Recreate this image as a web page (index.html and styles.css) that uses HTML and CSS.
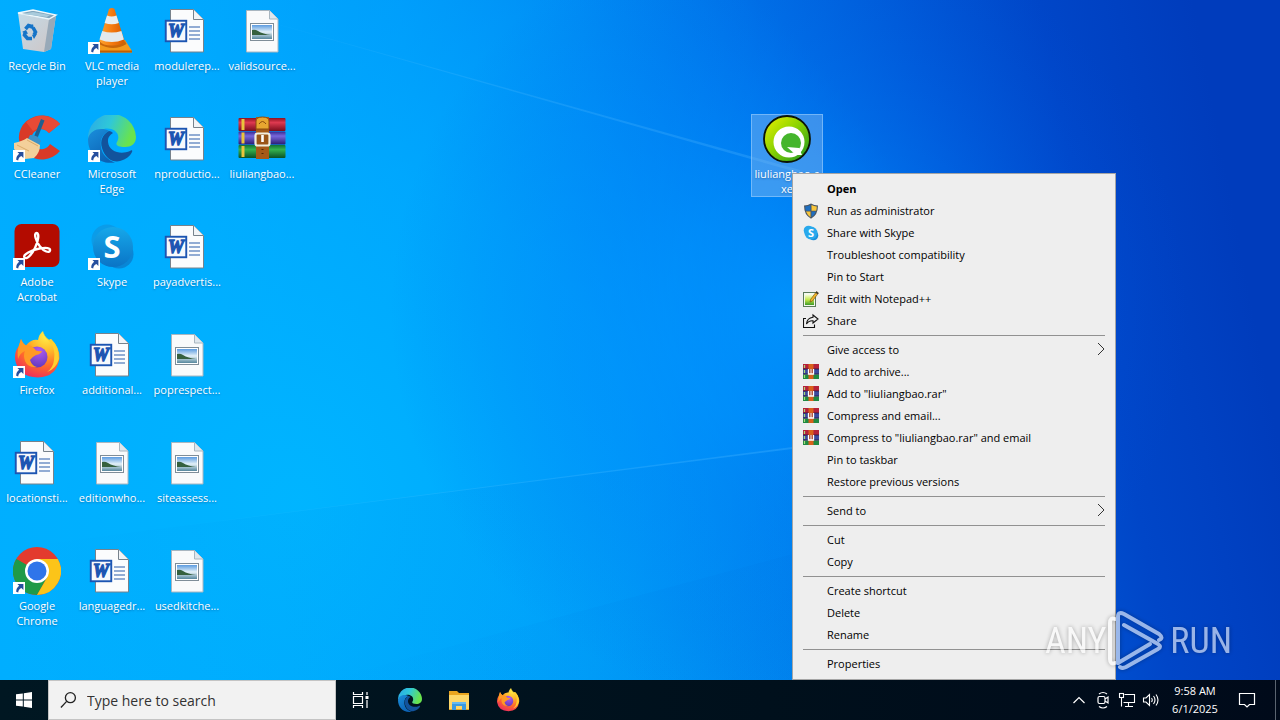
FILE: index.html
```html
<!DOCTYPE html>
<html lang="en">
<head>
<meta charset="utf-8">
<title>Desktop</title>
<link rel="stylesheet" href="styles.css">
</head>
<body>
<svg class="defs" aria-hidden="true">
  <defs>
    <linearGradient id="gEdgeA" x1="0" y1="0" x2="1" y2="0.3"><stop offset="0" stop-color="#2aa7e8"/><stop offset="0.5" stop-color="#2fc8d8"/><stop offset="1" stop-color="#69e34d"/></linearGradient>
    <linearGradient id="gEdgeB" x1="0" y1="0" x2="0.6" y2="1"><stop offset="0" stop-color="#1a8fdc"/><stop offset="1" stop-color="#0c62b4"/></linearGradient>
    <radialGradient id="gFox" cx="0.7" cy="0.1" r="1"><stop offset="0" stop-color="#fff14a"/><stop offset="0.35" stop-color="#ffb629"/><stop offset="0.65" stop-color="#ff6a2b"/><stop offset="1" stop-color="#ec2563"/></radialGradient>
    <radialGradient id="gGlobe" cx="0.6" cy="0.2" r="0.9"><stop offset="0" stop-color="#b05cf0"/><stop offset="1" stop-color="#5a35b8"/></radialGradient>
    <linearGradient id="gSkype" x1="0" y1="0" x2="0" y2="1"><stop offset="0" stop-color="#16a8ea"/><stop offset="1" stop-color="#0a74c6"/></linearGradient>
    <linearGradient id="gSky" x1="0" y1="0" x2="0" y2="1"><stop offset="0" stop-color="#5b9be0"/><stop offset="0.5" stop-color="#e4f1f8"/><stop offset="1" stop-color="#55869c"/></linearGradient>
    <linearGradient id="gCone" x1="0" y1="0" x2="1" y2="0"><stop offset="0" stop-color="#ffa52e"/><stop offset="0.5" stop-color="#f57a10"/><stop offset="1" stop-color="#d45a00"/></linearGradient>
    <linearGradient id="gBin" x1="0" y1="0" x2="1" y2="1"><stop offset="0" stop-color="#c3dbe8"/><stop offset="1" stop-color="#cfc5c5"/></linearGradient>
    <linearGradient id="gLime" x1="0" y1="0" x2="1" y2="1"><stop offset="0" stop-color="#eef200"/><stop offset="0.45" stop-color="#8fd400"/><stop offset="1" stop-color="#149324"/></linearGradient>
    <linearGradient id="gRed" x1="0" y1="0" x2="0" y2="1"><stop offset="0" stop-color="#8e1220"/><stop offset="0.35" stop-color="#de3a50"/><stop offset="1" stop-color="#7a0d1c"/></linearGradient>
    <linearGradient id="gViolet" x1="0" y1="0" x2="0" y2="1"><stop offset="0" stop-color="#352a92"/><stop offset="0.35" stop-color="#7867dc"/><stop offset="1" stop-color="#2a1c72"/></linearGradient>
    <linearGradient id="gGreen" x1="0" y1="0" x2="0" y2="1"><stop offset="0" stop-color="#127236"/><stop offset="0.35" stop-color="#35b24e"/><stop offset="1" stop-color="#0a5226"/></linearGradient>
    <linearGradient id="gNote" x1="0" y1="0" x2="0" y2="1"><stop offset="0" stop-color="#f8ffe0"/><stop offset="0.5" stop-color="#c4e84a"/><stop offset="1" stop-color="#3c9a28"/></linearGradient>

    <symbol id="shortcut" viewBox="0 0 48 48">
      <rect x="0" y="35" width="12" height="12" fill="#fff"/>
      <path d="M4.400 37h6v6l-2-2c-2 1-3 2.400-3.200 4.600l-2-0.800c0-2.800 1-4.600 3-6z" fill="#264f9e"/>
    </symbol>
    <symbol id="bin" viewBox="0 0 48 48">
      <path d="M5 6L10 42L31 45L38 42L43 8L35 12z" fill="url(#gBin)"/>
      <path d="M36 12L43 8L38 42L31 45z" fill="#98a9b8"/>
      <path d="M5 6L20 3L43 8L36 12z" fill="#7fa5bd" stroke="#eef8fc" stroke-width="1.400"/>
      <path d="M9 7L20 5L37 8L34 10z" fill="#a9cbdc"/>
      <g fill="none" stroke="#1574c8" stroke-width="3.600"><path d="M12.500 22l3-3.500 3.500 1"/><path d="M20 20.500l2.500 4.500-1.500 3"/><path d="M19 31.500h-4.500l-3-3.500 1-3.500"/></g>
      <path d="M20 17l1 5-5-1zM24 27l-3 5-2-4zM9 25l4-2 2 4z" fill="#1574c8"/>
    </symbol>
    <symbol id="vlc" viewBox="0 0 48 48">
      <path d="M12 33h25l7 11v1.500H7V44z" fill="#f39a1c"/>
      <path d="M5 43.500h39v2H5z" fill="#c35e00"/>
      <path d="M12 34q12 8 25 0l1.500 3q-13 8-27.500 0z" fill="#c9660a"/>
      <path d="M21 2q3-2 5.500 0L36.500 34q-3 4.500-12.500 4.500T11.500 34z" fill="url(#gCone)"/>
      <path d="M19 8.500q4.500 2 9.500 0l2.300 7.500q-7 2.500-14.200 0z" fill="#e8edf0"/>
      <path d="M14.200 24q9.500 3 19.200 0l2.500 8.500q-12 5-24.400 0z" fill="#e3e9ed"/>
    </symbol>
    <symbol id="word" viewBox="0 0 48 48">
      <path d="M7.500 2.500h23l10 10v32.500h-33z" fill="#fbfcfd" stroke="#77828c"/>
      <path d="M30.500 2.500v10h10" fill="#f1f4f7" stroke="#77828c"/>
      <path d="M26 20h11M26 24h11M26 28h11M26 32h11" stroke="#2b5cab" stroke-width="1.200"/>
      <rect x="2.750" y="13.750" width="20.500" height="20.500" fill="#f7f9fc" stroke="#1c55b2" stroke-width="1.900"/>
      <text x="13" y="30" text-anchor="middle" font-family="Liberation Serif, serif" font-size="18" font-weight="700" font-style="italic" fill="#1c55b2" stroke="#1c55b2" stroke-width="1.300">W</text>
    </symbol>
    <symbol id="image" viewBox="0 0 48 48">
      <path d="M8.500 3.500h23l8.500 8.500v33h-31.500z" fill="#f9fafb" stroke="#a9b6c0"/>
      <path d="M31.500 3.500v8.500h8.500" fill="#dfe7ee" stroke="#a9b6c0"/>
      <rect x="12.500" y="16.500" width="23" height="17" fill="#fff" stroke="#7f8d98"/>
      <rect x="14" y="18" width="20" height="14" fill="url(#gSky)"/>
      <path d="M14 23q3-1 6 1 5 3 13 4H14z" fill="#35603e"/>
    </symbol>
    <symbol id="ccleaner" viewBox="0 0 48 48">
      <path d="M47 9A23 22 0 1 0 47 36L37 29A10 10 0 1 1 36 18z" fill="#d93a28"/>
      <path d="M47 9A23 22 0 0 0 13 7L20 16Q28 10 36 18z" fill="#e94a35"/>
      <path d="M28 4l3.500 1.500-8 20-3.500-1.500z" fill="#1e5f8f"/>
      <path d="M17 20q7-1 11 6l-3 5-11-5z" fill="#3b92c8"/>
      <path d="M1 28q9-2 13-5l13 7q0 8-6 13l-9 1L1 34z" fill="#f3d09a"/>
      <path d="M14 25l11 6M4 30l12 6" stroke="#d9ab6a" fill="none"/>
    </symbol>
    <symbol id="edge" viewBox="0 0 48 48">
      <path d="M0 24A24 24 0 0 1 48 22c0 7-5 10-11 10-7 0-10-2-8-5 5-9-5-15-13-13C7 15 2 20 0 24z" fill="url(#gEdgeA)"/>
      <path d="M0 24C2 14 14 12 21 16c-7 3-9 9-8 16 1 8 7 13 14 15.500C11 50 0 39 0 24z" fill="url(#gEdgeB)"/>
      <path d="M21 16c-7 4-9 10-7 17 3 11 12 15 18 13 6-1.500 10-5 12-9 1-2-1-2-2-1-9 4-21 1-22-9-.3-5 2-7 5-9q-2-2-4-2z" fill="#12539c"/>
    </symbol>
    <symbol id="rar" viewBox="0 0 48 48">
      <rect x="0.500" y="3" width="47" height="13" rx="1" fill="url(#gRed)"/>
      <rect x="0.500" y="16.500" width="47" height="13" rx="1" fill="url(#gViolet)"/>
      <rect x="0.500" y="30" width="47" height="13" rx="1" fill="url(#gGreen)"/>
      <path d="M5 4v11M5 17.500v11M5 31v11" stroke="#e9c43c" stroke-width="3"/>
      <rect x="18" y="2" width="13" height="42" fill="#a55a18"/>
      <path d="M18 14V6q0-4 6.500-4T31 6v8z" fill="#e7a630" stroke="#8a4b0c"/>
      <path d="M21 9q3.500-5 7 0" fill="none" stroke="#8a4b0c"/>
      <rect x="17.500" y="18.500" width="14" height="12" rx="2" fill="#9a5618" stroke="#f1efdf" stroke-width="2.200"/>
      <path d="M24.500 20v7" stroke="#fff" stroke-width="2.600"/>
      <path d="M24.500 34v1M24.500 38v1" stroke="#4f2807" stroke-width="2"/>
    </symbol>
    <symbol id="acrobat" viewBox="0 0 48 48">
      <rect x="1.500" y="1" width="45" height="43" rx="7" fill="#b30b00"/>
      <path d="M11.500 34.500c-2-3 7-7.500 15-9 7-1.200 11-.5 10.500 2-.6 3-6 1-10-4C23 19 20.500 10 23.500 10s2 8-1.500 15-8.600 12-10.500 9.500z" fill="none" stroke="#fff" stroke-width="2.400"/>
    </symbol>
    <symbol id="skype" viewBox="0 0 48 48">
      <circle cx="19" cy="17" r="15.500" fill="#0b9ce8"/><circle cx="31" cy="31" r="14.500" fill="#0986d6"/>
      <circle cx="25" cy="24" r="20" fill="url(#gSkype)"/>
      <text x="24" y="35" text-anchor="middle" font-family="Open Sans, sans-serif" font-size="31" font-weight="700" fill="#fff">S</text>
    </symbol>
    <symbol id="firefox" viewBox="0 0 48 48">
      <path d="M8 8q2 5 5 6.500Q18 8 25 9q1-6 5-9 1 6 6 9l2-1Q47 17 46.500 27 44 46 25 46.500 5 46 2 28q-.5-8 4-13z" fill="url(#gFox)"/>
      <circle cx="24" cy="26" r="10.500" fill="url(#gGlobe)"/>
      <path d="M8 8q2 5 5 6.500 6-1 10 5 3 1 6 .5-1 3-6 4-4 2-6 5 2 6 7 7-9 1-12-6-2-6 0-10-5 2-7 8-1-8 1-14z" fill="#ff9a25"/>
      <path d="M30 0q1 6 6 10 7 7 5 19-1 8-7 12 9-3 12-13 0-13-8-20l-2 1q-5-4-6-9z" fill="#ffd02e"/>
    </symbol>
    <symbol id="chrome" viewBox="0 0 48 48">
      <circle cx="24" cy="24" r="24" fill="#e33b2e"/>
      <path d="M3.200 12A24 24 0 0 0 24 48L34.400 30z" fill="#1f9a48"/>
      <path d="M3.200 12L13.600 30 24 36V24z" fill="#1f9a48"/>
      <path d="M24 48A24 24 0 0 0 44.800 12H24L34.400 30z" fill="#fcc419"/>
      <circle cx="24" cy="24" r="12" fill="#fff"/><circle cx="24" cy="24" r="9.500" fill="#2f75ea"/>
    </symbol>
    <symbol id="qbrowser" viewBox="0 0 48 48">
      <circle cx="24" cy="24" r="23" fill="url(#gLime)" stroke="#0c1406" stroke-width="1.800"/>
      <circle cx="26" cy="27" r="15.500" fill="#fff"/>
      <circle cx="28" cy="28" r="10" fill="#45b52c"/>
      <path d="M24 32l12 1 3 7h-6z" fill="#fff"/>
    </symbol>
    <symbol id="shield" viewBox="0 0 16 16">
      <path d="M8 .5Q5 2.300 1 2.500 1 12 8 15.700 15 12 15 2.500 11 2.300 8 .5z" fill="#4b5561"/>
      <path d="M7.500 2Q5 3.300 2.200 3.500q0 2.200.6 4.200h4.700z" fill="#1e6fc0"/><path d="M8.500 2q2.500 1.300 5.300 1.500 0 2.200-.6 4.200H8.500z" fill="#f9c63b"/>
      <path d="M3 8.500h4.500v5.700Q4.400 12.200 3 8.500z" fill="#f9c63b"/><path d="M13 8.500H8.500v5.700q3.100-2 4.500-5.700z" fill="#1e6fc0"/>
    </symbol>
    <symbol id="skypeSmall" viewBox="0 0 16 16">
      <circle cx="5.500" cy="5.500" r="4.800" fill="#29a9ec"/><circle cx="10.500" cy="10.500" r="4.800" fill="#1b8fdc"/><circle cx="8" cy="8" r="6.500" fill="#29a9ec"/>
      <text x="8" y="12" text-anchor="middle" font-family="Open Sans, sans-serif" font-size="11" font-weight="700" fill="#fff">S</text>
    </symbol>
    <symbol id="notepad" viewBox="0 0 16 16">
      <rect x="0.500" y="1.500" width="12" height="14" fill="#f4f8ee" stroke="#5a7a5a"/>
      <rect x="2" y="3.500" width="9" height="10.500" fill="url(#gNote)"/>
      <path d="M13.500.5l2 1.500-6 8-2.500 1 .7-2.700z" fill="#f0b429" stroke="#6b4a14" stroke-width="0.600"/><path d="M13.500.5l2 1.500-1 1.300-2-1.500z" fill="#333"/>
    </symbol>
    <symbol id="share" viewBox="0 0 16 16">
      <path d="M3 5.500H.5v9h11v-3M10 2l5 4-5 4V7.800Q5.500 7.500 3.500 11 4 5 10 4.300z" fill="none" stroke="#111" stroke-width="1.100"/>
    </symbol>
    <symbol id="rarSmall" viewBox="0 0 16 16">
      <path d="M0 0h16v5H0z" fill="#b5213a"/><path d="M0 5h16v5.500H0z" fill="#3b4a9e"/><path d="M0 10.500h16V15H0z" fill="#1f8a42"/>
      <path d="M0 5h16M0 10h16" stroke="#2c1440" stroke-width="0.800"/>
      <path d="M1.500 1v3M1.500 6v3M1.500 11v3" stroke="#a8dc7a" stroke-width="1.200"/>
      <rect x="5.500" y="0" width="5" height="15" fill="#d9601c"/>
      <path d="M5.500 5v5h5v-5" fill="#a63b24" stroke="#fff" stroke-width="1.300"/><path d="M8 5v5" stroke="#fff"/>
    </symbol>
    <symbol id="chevron" viewBox="0 0 8 14"><path d="M1 1l6 6-6 6" fill="none" stroke="#333" stroke-width="1"/></symbol>
    <symbol id="folder" viewBox="0 0 24 24">
      <path d="M2 3h8l2 2h10v17H2z" fill="#e9a520"/><path d="M2 7h20v14H2z" fill="#fdd769"/>
      <path d="M5 22v-8h14v8h-4v-4H9v4z" fill="#3a9ae0"/><path d="M5 14h14v2H5z" fill="#63b8f0"/>
    </symbol>
  </defs>
</svg>

<main class="desktop">
  <svg class="wallpaper" viewBox="0 0 1280 680" preserveAspectRatio="none" aria-hidden="true">
    <defs>
      <linearGradient id="wBase" gradientUnits="userSpaceOnUse" x1="0" y1="480" x2="1240" y2="240"><stop offset="0" stop-color="#00b2ff"/><stop offset="0.200" stop-color="#00acff"/><stop offset="0.380" stop-color="#009cfa"/><stop offset="0.520" stop-color="#0088f2"/><stop offset="0.640" stop-color="#0074e8"/><stop offset="0.780" stop-color="#0058d6"/><stop offset="0.880" stop-color="#0046c8"/><stop offset="1" stop-color="#003cbc"/></linearGradient>
      <radialGradient id="wLeft" gradientUnits="userSpaceOnUse" cx="300" cy="500" r="680"><stop offset="0" stop-color="#00b6ff" stop-opacity="0.900"/><stop offset="0.500" stop-color="#00acff" stop-opacity="0.650"/><stop offset="1" stop-color="#009cff" stop-opacity="0"/></radialGradient>
      <radialGradient id="wGlow" gradientUnits="userSpaceOnUse" cx="790" cy="310" r="400"><stop offset="0" stop-color="#0096ff" stop-opacity="0.800"/><stop offset="0.300" stop-color="#008aff" stop-opacity="0.450"/><stop offset="0.650" stop-color="#006cf4" stop-opacity="0.200"/><stop offset="1" stop-color="#0050e0" stop-opacity="0"/></radialGradient>
      <linearGradient id="wRay" x1="0" y1="0" x2="1" y2="0"><stop offset="0" stop-color="#5cc8ff" stop-opacity="0"/><stop offset="0.400" stop-color="#5cc0ff" stop-opacity="0.200"/><stop offset="1" stop-color="#60c0ff" stop-opacity="0.250"/></linearGradient>
      <linearGradient id="wFan" x1="0" y1="0" x2="1" y2="0"><stop offset="0" stop-color="#0074e0" stop-opacity="0"/><stop offset="1" stop-color="#0074e0" stop-opacity="0.140"/></linearGradient>
    </defs>
    <rect width="1280" height="680" fill="url(#wBase)"/>
    <rect width="1280" height="680" fill="url(#wLeft)"/>
    <rect width="1280" height="680" fill="url(#wGlow)"/>
    <path d="M150 530L800 448V680H0V550z" fill="url(#wFan)"/>
    <path d="M400 660L800 552V680H330z" fill="url(#wFan)"/>
    <path d="M220 8L800 170V173z" fill="url(#wRay)"/>
    <path d="M150 530L800 446V448z" fill="url(#wRay)"/>
  </svg>

  <div class="icons">
    <a class="tile" href="#"><span class="pic"><svg><use href="#bin"/></svg></span><span class="label">Recycle Bin</span></a>
    <a class="tile" href="#"><span class="pic"><svg><use href="#ccleaner"/><use href="#shortcut"/></svg></span><span class="label">CCleaner</span></a>
    <a class="tile" href="#"><span class="pic"><svg><use href="#acrobat"/><use href="#shortcut"/></svg></span><span class="label">Adobe<br>Acrobat</span></a>
    <a class="tile" href="#"><span class="pic"><svg><use href="#firefox"/><use href="#shortcut"/></svg></span><span class="label">Firefox</span></a>
    <a class="tile" href="#"><span class="pic"><svg><use href="#word"/></svg></span><span class="label">locationsti...</span></a>
    <a class="tile" href="#"><span class="pic"><svg><use href="#chrome"/><use href="#shortcut"/></svg></span><span class="label">Google<br>Chrome</span></a>
    <a class="tile" href="#"><span class="pic"><svg><use href="#vlc"/><use href="#shortcut"/></svg></span><span class="label">VLC media<br>player</span></a>
    <a class="tile" href="#"><span class="pic"><svg><use href="#edge"/><use href="#shortcut"/></svg></span><span class="label">Microsoft<br>Edge</span></a>
    <a class="tile" href="#"><span class="pic"><svg><use href="#skype"/><use href="#shortcut"/></svg></span><span class="label">Skype</span></a>
    <a class="tile" href="#"><span class="pic"><svg><use href="#word"/></svg></span><span class="label">additional...</span></a>
    <a class="tile" href="#"><span class="pic"><svg><use href="#image"/></svg></span><span class="label">editionwho...</span></a>
    <a class="tile" href="#"><span class="pic"><svg><use href="#word"/></svg></span><span class="label">languagedr...</span></a>
    <a class="tile" href="#"><span class="pic"><svg><use href="#word"/></svg></span><span class="label">modulerep...</span></a>
    <a class="tile" href="#"><span class="pic"><svg><use href="#word"/></svg></span><span class="label">nproductio...</span></a>
    <a class="tile" href="#"><span class="pic"><svg><use href="#word"/></svg></span><span class="label">payadvertis...</span></a>
    <a class="tile" href="#"><span class="pic"><svg><use href="#image"/></svg></span><span class="label">poprespect...</span></a>
    <a class="tile" href="#"><span class="pic"><svg><use href="#image"/></svg></span><span class="label">siteassess...</span></a>
    <a class="tile" href="#"><span class="pic"><svg><use href="#image"/></svg></span><span class="label">usedkitche...</span></a>
    <a class="tile" href="#"><span class="pic"><svg><use href="#image"/></svg></span><span class="label">validsource...</span></a>
    <a class="tile" href="#"><span class="pic"><svg><use href="#rar"/></svg></span><span class="label">liuliangbao...</span></a>
    <a class="tile selected" href="#"><span class="pic"><svg><use href="#qbrowser"/></svg></span><span class="label">liuliangbao.e<br>xe</span></a>
  </div>

  <div class="menu" role="menu">
    <button class="item default" role="menuitem">Open</button>
    <button class="item" role="menuitem"><svg class="glyph"><use href="#shield"/></svg>Run as administrator</button>
    <button class="item" role="menuitem"><svg class="glyph"><use href="#skypeSmall"/></svg>Share with Skype</button>
    <button class="item" role="menuitem">Troubleshoot compatibility</button>
    <button class="item" role="menuitem">Pin to Start</button>
    <button class="item" role="menuitem"><svg class="glyph"><use href="#notepad"/></svg>Edit with Notepad++</button>
    <button class="item" role="menuitem"><svg class="glyph"><use href="#share"/></svg>Share</button>
    <hr class="rule">
    <button class="item" role="menuitem">Give access to<svg class="arrow"><use href="#chevron"/></svg></button>
    <button class="item" role="menuitem"><svg class="glyph"><use href="#rarSmall"/></svg>Add to archive...</button>
    <button class="item" role="menuitem"><svg class="glyph"><use href="#rarSmall"/></svg>Add to "liuliangbao.rar"</button>
    <button class="item" role="menuitem"><svg class="glyph"><use href="#rarSmall"/></svg>Compress and email...</button>
    <button class="item" role="menuitem"><svg class="glyph"><use href="#rarSmall"/></svg>Compress to "liuliangbao.rar" and email</button>
    <button class="item" role="menuitem">Pin to taskbar</button>
    <button class="item" role="menuitem">Restore previous versions</button>
    <hr class="rule">
    <button class="item" role="menuitem">Send to<svg class="arrow"><use href="#chevron"/></svg></button>
    <hr class="rule">
    <button class="item" role="menuitem">Cut</button>
    <button class="item" role="menuitem">Copy</button>
    <hr class="rule">
    <button class="item" role="menuitem">Create shortcut</button>
    <button class="item" role="menuitem">Delete</button>
    <button class="item" role="menuitem">Rename</button>
    <hr class="rule">
    <button class="item" role="menuitem">Properties</button>
  </div>

  <div class="watermark">
    <span>ANY</span>
    <svg class="mark" viewBox="0 0 56 64" aria-hidden="true">
      <g fill="none" stroke="#fff" stroke-width="4" stroke-linejoin="round" stroke-linecap="round">
        <path d="M5 10q-5-2-5 4v36q0 6 5 4"/>
        <path d="M8 54V8q0-6 6-3l35 20q5 4 0 6"/>
        <path d="M14 16l34 19q4 3 0 5L16 58q-4 2-6 0"/>
        <path d="M8 54l32-19"/>
      </g>
    </svg>
    <span>RUN</span>
  </div>
</main>

<footer class="taskbar">
  <button class="start" aria-label="Start"><svg viewBox="0 0 16 16"><path d="M0 2.300L6.800 1.400V7.500H0zM7.800 1.200L16 0V7.500H7.800zM0 8.500H6.800v6.100L0 13.700zM7.800 8.500H16V16l-8.200-1.200z" fill="#fff"/></svg></button>
  <label class="search">
    <svg viewBox="0 0 18 18"><path d="M1 17l6-6.500" stroke="#222" stroke-width="1.400"/><circle cx="11" cy="6.500" r="5.300" fill="none" stroke="#222" stroke-width="1.400"/></svg>
    <input type="text" placeholder="Type here to search" aria-label="Type here to search">
  </label>
  <nav class="apps">
    <button class="app" aria-label="Task View"><svg class="small" viewBox="0 0 18 18"><g fill="none" stroke="#fff" stroke-width="1.200"><path d="M1.500 1v2.500h9V1M1.500 17v-2.500h9V17M1.500 5.500h9v7h-9zM15 1v3M15 9v8"/></g><path d="M13.500 5h3v3h-3z" fill="#fff"/></svg></button>
    <button class="app" aria-label="Microsoft Edge"><svg><use href="#edge"/></svg></button>
    <button class="app" aria-label="File Explorer"><svg><use href="#folder"/></svg></button>
    <button class="app" aria-label="Firefox"><svg><use href="#firefox"/></svg></button>
  </nav>
  <div class="tray">
    <button class="status" aria-label="Show hidden icons"><svg viewBox="0 0 18 18"><path d="M3.500 12L9 6.500l5.500 5.500" fill="none" stroke="#fff" stroke-width="1.200"/></svg></button>
    <button class="status" aria-label="Meet Now"><svg viewBox="0 0 18 18"><g fill="none" stroke="#fff" stroke-width="1.200"><rect x="4" y="5.500" width="7" height="7" rx="1.500"/><path d="M11 8l3-2v6l-3-2M5 3q4-3 8 0M5 15.500q4 3 8 0"/></g></svg></button>
    <button class="status" aria-label="Network"><svg viewBox="0 0 18 18"><g fill="none" stroke="#fff" stroke-width="1.100"><path d="M6.500 3.500h10v8H5.500M10.500 11.500v3.500M7 15.500h8M3.500 6.500v9"/><rect x="1.500" y="2.500" width="4" height="4"/></g></svg></button>
    <button class="status" aria-label="Volume"><svg viewBox="0 0 18 18"><g fill="none" stroke="#fff" stroke-width="1.100"><path d="M1.500 7h2.500l3.500-3.500v11L4 11H1.500zM9.500 7q1.500 2 0 4M11.500 5q3 4 0 8M14 3.500q4 5.500 0 11"/></g></svg></button>
    <button class="clock"><span>9:58 AM</span><span>6/1/2025</span></button>
    <button class="notes" aria-label="Notifications"><svg viewBox="0 0 18 18"><path d="M1.500 2.500h15v11h-5L9 16l-2.500-2.500h-5z" fill="none" stroke="#fff" stroke-width="1.200"/></svg></button>
    <button class="peek" aria-label="Show desktop"></button>
  </div>
</footer>
</body>
</html>
```
FILE: styles.css
```css
* { box-sizing: border-box; }
body {
  margin: 0;
  min-height: 100vh;
  display: flex;
  flex-direction: column;
  overflow: hidden;
  font-family: "Open Sans", "Noto Sans", sans-serif;
  font-size: 11px;
}
button { border: 0; padding: 0; background: none; color: inherit; font: inherit; }
svg { display: block; }
.defs { position: absolute; width: 0; height: 0; }

.desktop { position: relative; flex: 1; background: #0090f8; }
.wallpaper { position: absolute; inset: 0; width: 100%; height: 100%; }

.icons {
  position: relative;
  display: grid;
  grid-auto-flow: column;
  grid-template-rows: repeat(6, 108px);
  grid-auto-columns: 75px;
}
.tile {
  display: flex;
  flex-direction: column;
  align-items: center;
  gap: 3px;
  align-self: start;
  margin: 6px 2px 0 1px;
  padding-top: 1px;
  color: #fff;
  text-decoration: none;
  text-align: center;
  line-height: 15px;
}
.pic svg { width: 48px; height: 48px; }
.label { white-space: nowrap; text-shadow: 0 1px 2px rgba(0, 40, 90, 0.4); }
.selected {
  grid-column: 11;
  grid-row: 2;
  padding-bottom: 1px;
  background: rgba(130, 185, 240, 0.45);
  outline: 1px solid rgba(150, 205, 255, 0.6);
  outline-offset: -1px;
}

.menu {
  position: absolute;
  right: 164px;
  bottom: 0;
  width: 324px;
  padding: 4px 0;
  background: #eee;
  border: 1px solid #a5a5a5;
  color: #000;
}
.item {
  position: relative;
  display: flex;
  align-items: center;
  width: 100%;
  height: 22px;
  padding: 0 10px 2px 34px;
  text-align: left;
}
.default { font-weight: 700; }
.glyph { position: absolute; left: 10px; top: 3px; width: 16px; height: 16px; }
.arrow { width: 8px; height: 14px; margin-left: auto; }
.rule { height: 1px; margin: 3px 10px; border: 0; background: #919191; }

.watermark {
  position: absolute;
  right: 48px;
  bottom: 7px;
  display: flex;
  align-items: center;
  gap: 4px;
  color: #fff;
  opacity: 0.6;
  font-family: "Roboto Condensed", "Liberation Sans Narrow", Roboto, sans-serif;
  font-weight: 400;
  font-size: 36px;
  line-height: 1;
  filter: drop-shadow(0 0 2px rgba(0, 0, 0, 0.5));
}
.mark { width: 56px; height: 64px; overflow: visible; }

.taskbar {
  display: flex;
  height: 40px;
  background: linear-gradient(90deg, #001722, #00101c 60%, #000a1a);
  color: #fff;
}
.start { display: grid; place-items: center; width: 48px; }
.start svg { width: 16px; height: 16px; }
.search {
  display: flex;
  align-items: center;
  gap: 10px;
  width: 288px;
  padding: 0 11px;
  background: #f2f2f2;
  border: 1px solid #c4c4c4;
}
.search svg { width: 17px; height: 18px; }
.search input {
  flex: 1;
  min-width: 0;
  border: 0;
  padding: 0;
  background: none;
  font: inherit;
  font-size: 14px;
}
.search input::placeholder { color: #333; opacity: 1; }
.apps { display: flex; }
.app { display: grid; place-items: center; width: 49px; }
.app svg { width: 24px; height: 24px; }
.app .small { width: 18px; height: 18px; }
.tray { display: flex; margin-left: auto; }
.status { display: grid; place-items: center; width: 24px; }
.status svg, .notes svg { width: 18px; height: 18px; }
.clock {
  display: flex;
  flex-direction: column;
  align-items: center;
  justify-content: center;
  width: 64px;
  line-height: 18px;
}
.notes { display: grid; place-items: center; width: 40px; margin-right: 8px; }
.peek { width: 5px; border-left: 1px solid #5a6470; }
```
